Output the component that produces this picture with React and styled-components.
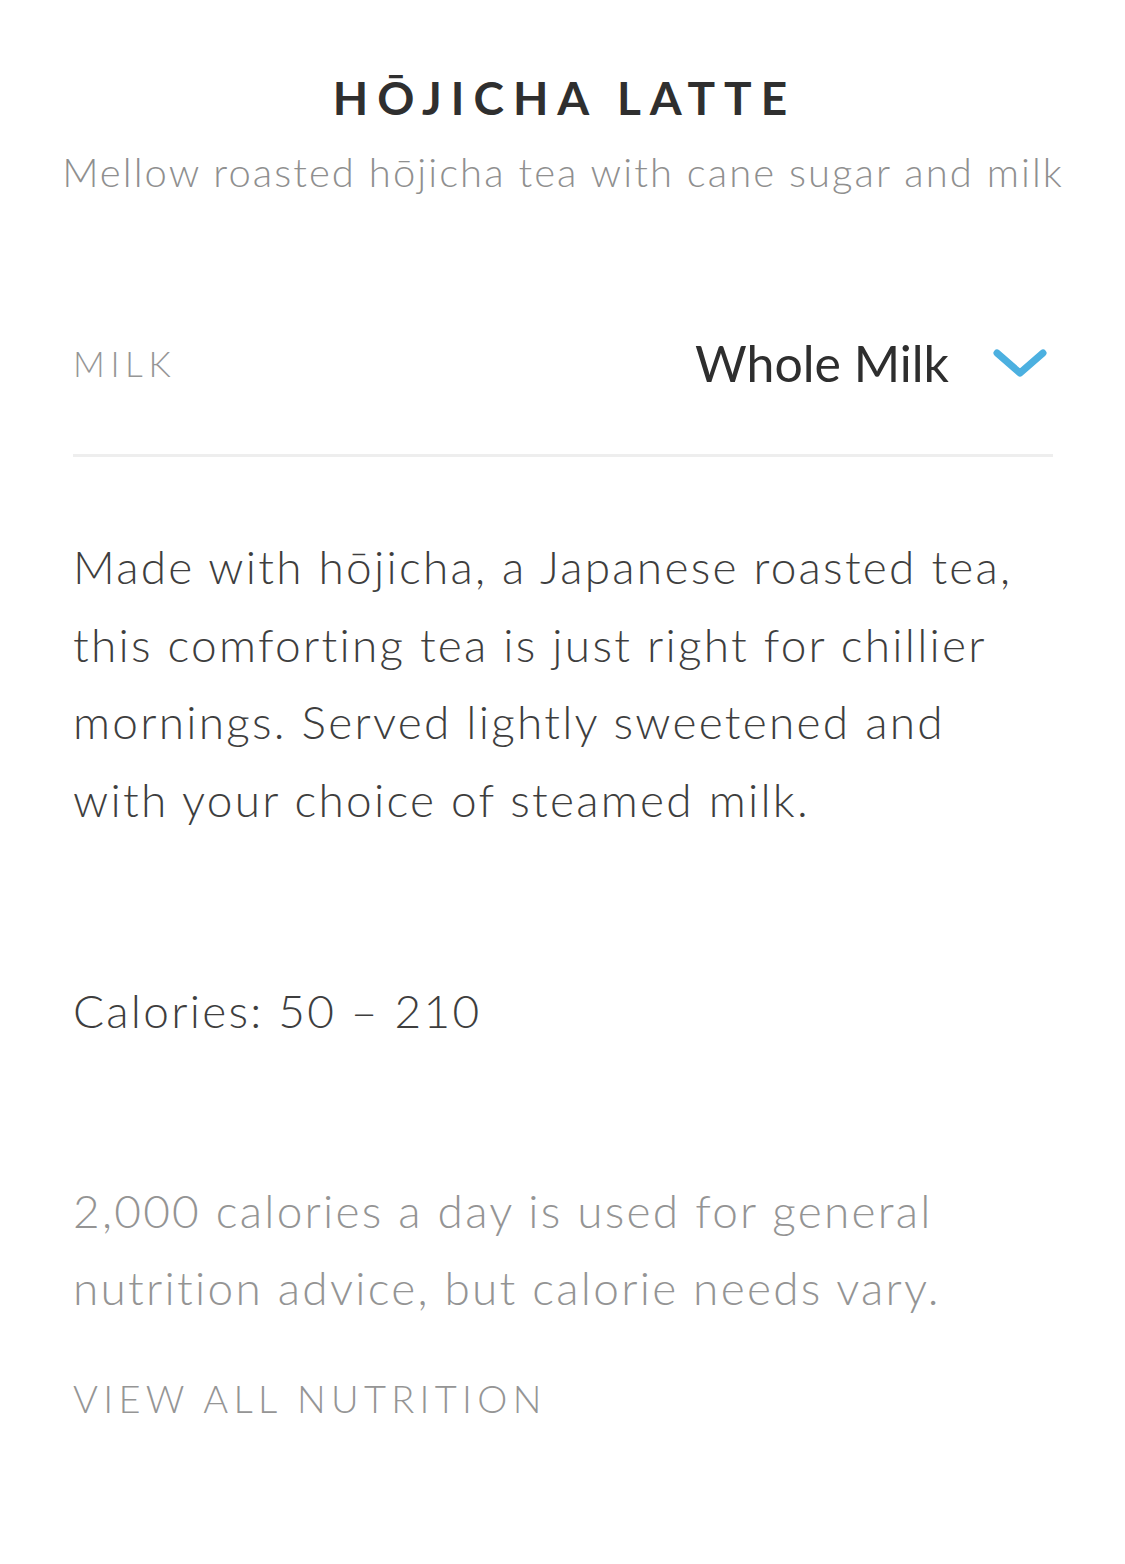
import React from "react";
import styled, { createGlobalStyle } from "styled-components";

const GlobalStyle = createGlobalStyle`
  html, body {
    margin: 0;
    padding: 0;
    background: #ffffff;
  }
  body {
    font-family: Lato, "Noto Sans", "Liberation Sans", sans-serif;
    font-variant-ligatures: none;
    -webkit-font-smoothing: antialiased;
  }
`;

const Page = styled.div`
  width: 1125px;
  min-height: 1564px;
  box-sizing: border-box;
  padding: 0 72px 0 73px;
`;

const Header = styled.header`
  display: flex;
  flex-direction: column;
  align-items: center;
  padding-top: 70px;
`;

const Title = styled.h1`
  margin: 0 -3px 0 0;
  font-size: 46px;
  line-height: 56px;
  font-weight: 700;
  letter-spacing: 9px;
  color: #2f2f2f;
`;

const Subtitle = styled.p`
  margin: 22px -30px 0;
  font-size: 40px;
  line-height: 48px;
  font-weight: 300;
  letter-spacing: 2.05px;
  color: #8f8f8f;
  white-space: nowrap;
`;

const OptionRow = styled.div`
  display: flex;
  align-items: center;
  justify-content: space-between;
  margin-top: 137px;
  padding-bottom: 61px;
  border-bottom: 3px solid #eeeeee;
`;

const OptionLabel = styled.span`
  font-size: 35px;
  letter-spacing: 5.6px;
  color: #969696;
  font-weight: 300;
`;

const Select = styled.div`
  display: flex;
  align-items: center;
  gap: 44px;
  padding-right: 6px;
`;

const SelectValue = styled.span`
  font-size: 50px;
  line-height: 60px;
  color: #2e2e2e;
  font-weight: 400;
`;

const Body = styled.p`
  margin: ${(p) => p.$top}px 0 0;
  font-size: 46px;
  line-height: 77.5px;
  letter-spacing: 2.25px;
  color: ${(p) => (p.$muted ? "#949494" : "#3e3e3e")};
  font-weight: 300;
`;

const LinkLabel = styled.div`
  margin-top: 48px;
  font-size: 38px;
  letter-spacing: 5.3px;
  color: #959595;
  font-weight: 300;
`;

const Chevron = () => (
  <svg width="54" height="30" viewBox="0 0 54 30" fill="none">
    <path
      d="M4 5 L27 25 L50 5"
      stroke="#4cb0e0"
      strokeWidth="7"
      strokeLinecap="round"
      strokeLinejoin="round"
    />
  </svg>
);

export default function App() {
  return (
    <>
      <GlobalStyle />
      <Page>
        <Header>
          <Title>HŌJICHA LATTE</Title>
          <Subtitle>Mellow roasted hōjicha tea with cane sugar and milk</Subtitle>
        </Header>
        <OptionRow>
          <OptionLabel>MILK</OptionLabel>
          <Select>
            <SelectValue>Whole Milk</SelectValue>
            <Chevron />
          </Select>
        </OptionRow>
        <Body $top={71}>
          Made with hōjicha, a Japanese roasted tea,
          <br />
          this comforting tea is just right for chillier
          <br />
          mornings. Served lightly sweetened and
          <br />
          with your choice of steamed milk.
        </Body>
        <Body $top={134}>Calories: 50 – 210</Body>
        <Body $top={122} $muted>
          2,000 calories a day is used for general
          <br />
          nutrition advice, but calorie needs vary.
        </Body>
        <LinkLabel>VIEW ALL NUTRITION</LinkLabel>
      </Page>
    </>
  );
}
